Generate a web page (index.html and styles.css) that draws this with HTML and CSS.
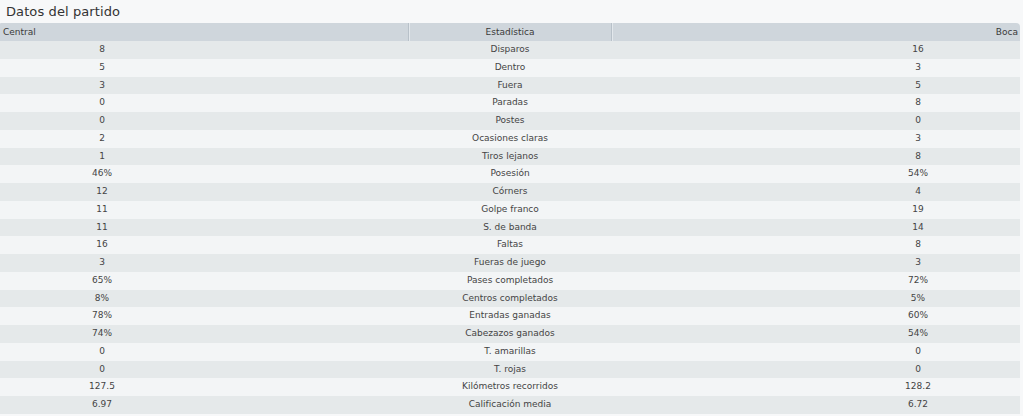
FILE: index.html
```html
<!DOCTYPE html>
<html lang="es">
<head>
<meta charset="utf-8">
<title>Datos del partido</title>
<link rel="stylesheet" href="styles.css">
</head>
<body>
<div class="panel">
  <h1 class="title">Datos del partido</h1>
  <div class="table">
    <div class="head">
      <div class="hcell left">Central</div>
      <div class="hcell mid">Estadística</div>
      <div class="hcell right">Boca</div>
    </div>
    <div class="row"><span>8</span><span></span><span>Disparos</span><span></span><span>16</span></div>
    <div class="row"><span>5</span><span></span><span>Dentro</span><span></span><span>3</span></div>
    <div class="row"><span>3</span><span></span><span>Fuera</span><span></span><span>5</span></div>
    <div class="row"><span>0</span><span></span><span>Paradas</span><span></span><span>8</span></div>
    <div class="row"><span>0</span><span></span><span>Postes</span><span></span><span>0</span></div>
    <div class="row"><span>2</span><span></span><span>Ocasiones claras</span><span></span><span>3</span></div>
    <div class="row"><span>1</span><span></span><span>Tiros lejanos</span><span></span><span>8</span></div>
    <div class="row"><span>46%</span><span></span><span>Posesión</span><span></span><span>54%</span></div>
    <div class="row"><span>12</span><span></span><span>Córners</span><span></span><span>4</span></div>
    <div class="row"><span>11</span><span></span><span>Golpe franco</span><span></span><span>19</span></div>
    <div class="row"><span>11</span><span></span><span>S. de banda</span><span></span><span>14</span></div>
    <div class="row"><span>16</span><span></span><span>Faltas</span><span></span><span>8</span></div>
    <div class="row"><span>3</span><span></span><span>Fueras de juego</span><span></span><span>3</span></div>
    <div class="row"><span>65%</span><span></span><span>Pases completados</span><span></span><span>72%</span></div>
    <div class="row"><span>8%</span><span></span><span>Centros completados</span><span></span><span>5%</span></div>
    <div class="row"><span>78%</span><span></span><span>Entradas ganadas</span><span></span><span>60%</span></div>
    <div class="row"><span>74%</span><span></span><span>Cabezazos ganados</span><span></span><span>54%</span></div>
    <div class="row"><span>0</span><span></span><span>T. amarillas</span><span></span><span>0</span></div>
    <div class="row"><span>0</span><span></span><span>T. rojas</span><span></span><span>0</span></div>
    <div class="row"><span>127.5</span><span></span><span>Kilómetros recorridos</span><span></span><span>128.2</span></div>
    <div class="row"><span>6.97</span><span></span><span>Calificación media</span><span></span><span>6.72</span></div>
  </div>
</div>
</body>
</html>
```
FILE: styles.css
```css
html, body {
  margin: 0;
  padding: 0;
  background: #f7f8f9;
}
body {
  font-family: "DejaVu Sans", Verdana, sans-serif;
  color: #444;
}
.panel {
  width: 1020px;
}
.title {
  margin: 0;
  height: 23px;
  padding-left: 6px;
  font-size: 13px;
  font-weight: normal;
  line-height: 24px;
  color: #333;
  letter-spacing: 0.1px;
}
.table {
  display: flex;
  flex-direction: column;
}
.head {
  display: grid;
  grid-template-columns: 2fr 1fr 2fr;
  height: 18px;
  background: #cfd6dc;
  border-top-right-radius: 4px;
  border-top-left-radius: 1px;
  font-size: 9px;
  line-height: 18px;
  color: #3a3a3a;
}
.hcell {
  padding: 0 3px;
}
.hcell.mid {
  text-align: center;
  border-left: 1px solid #b8c1c9;
  box-shadow: inset 1px 0 #e3e8ec;
  border-right: 1px solid #b8c1c9;
}
.hcell.right {
  text-align: right;
  box-shadow: inset 1px 0 #e3e8ec;
  padding-right: 2px;
}
.row {
  display: grid;
  grid-template-columns: repeat(5, 1fr);
  height: 17.76px;
  font-size: 9px;
  line-height: 17.76px;
  background: #f3f5f6;
  text-align: center;
}
.row:nth-child(even) {
  background: #e5e9ea;
}
.row span {
  white-space: nowrap;
}
```
